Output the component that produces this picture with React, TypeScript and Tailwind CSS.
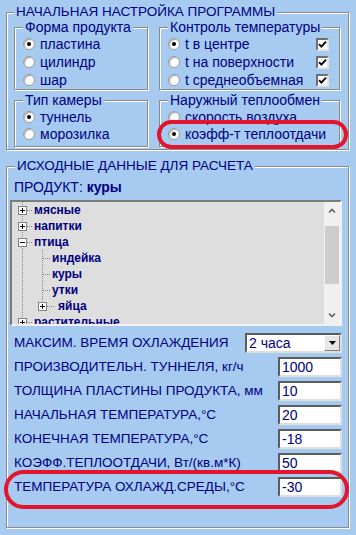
import type { ReactNode } from "react";

const etched =
  "border border-[#8a8a8a] shadow-[inset_1px_1px_0_#ffffff,1px_1px_0_#ffffff]";

const Radio = ({ on }: { on?: boolean }) => (
  <span className="w-[12px] h-[12px] shrink-0 rounded-full bg-white border border-[#9c9c9c] shadow-[inset_1px_1px_1px_#a8a8a8] flex items-center justify-center">
    {on && <span className="w-[4px] h-[4px] rounded-full bg-black" />}
  </span>
);

const Check = () => (
  <span className="w-[13px] h-[13px] bg-white border-2 border-t-[#6f6f6f] border-l-[#6f6f6f] border-r-[#e4e4e4] border-b-[#e4e4e4] flex items-center justify-center">
    <svg width="9" height="9" viewBox="0 0 9 9">
      <path d="M1 4.2 L3.4 6.6 L8 1.6" fill="none" stroke="#000" strokeWidth="1.9" />
    </svg>
  </span>
);

const Group = ({ title, className, children }: { title: string; className?: string; children: ReactNode }) => (
  <fieldset className={`${etched} pl-[8px] ${className ?? ""}`}>
    <legend className="px-0.5 bg-[#a6caf0] leading-4">{title}</legend>
    {children}
  </fieldset>
);

const Opt = ({ on, label, h = "h-[18px]" }: { on?: boolean; label: string; h?: string }) => (
  <div className={`${h} flex items-center gap-[5px]`}>
    <Radio on={on} />
    <span>{label}</span>
  </div>
);

const TempOpt = ({ on, label }: { on?: boolean; label: string }) => (
  <div className="h-[18px] flex items-center justify-between pr-[10px]">
    <div className="flex items-center gap-[5px]">
      <Radio on={on} />
      <span>{label}</span>
    </div>
    <Check />
  </div>
);

const dot = { stroke: "#8a8a8a", strokeDasharray: "1 1", strokeWidth: 1 };

const Box = ({ x, plus }: { x: number; plus: boolean }) => (
  <g>
    <rect x={x + 0.5} y={4.5} width={8} height={8} fill="#fff" stroke="#808080" />
    <line x1={x + 2} y1={8.5} x2={x + 7} y2={8.5} stroke="#000" />
    {plus && <line x1={x + 4.5} y1={6} x2={x + 4.5} y2={11} stroke="#000" />}
  </g>
);

type TreeRow = { label: string; kind: "root" | "child" | "sub"; plus?: boolean };

const rows: TreeRow[] = [
  { label: "мясные", kind: "root", plus: true },
  { label: "напитки", kind: "root", plus: true },
  { label: "птица", kind: "root", plus: false },
  { label: "индейка", kind: "child" },
  { label: "куры", kind: "child" },
  { label: "утки", kind: "child" },
  { label: "яйца", kind: "sub", plus: true },
  { label: "растительные", kind: "root", plus: true },
];

const TreeGlyph = ({ row }: { row: TreeRow }) => {
  const w = row.kind === "root" ? 20 : row.kind === "child" ? 38 : 44;
  return (
    <svg width={w} height="16" viewBox={`0 0 ${w} 16`} className="shrink-0">
      <line x1="8.5" y1="0" x2="8.5" y2="16" {...dot} />
      {row.kind === "root" && (
        <>
          <line x1="13" y1="8.5" x2="19" y2="8.5" {...dot} />
          <Box x={4} plus={!!row.plus} />
        </>
      )}
      {row.kind === "child" && (
        <>
          <line x1="28.5" y1="0" x2="28.5" y2="16" {...dot} />
          <line x1="29" y1="8.5" x2="37" y2="8.5" {...dot} />
        </>
      )}
      {row.kind === "sub" && (
        <>
          <line x1="28.5" y1="0" x2="28.5" y2="4" {...dot} />
          <line x1="33" y1="8.5" x2="41" y2="8.5" {...dot} />
          <Box x={24} plus />
        </>
      )}
    </svg>
  );
};

const sunken =
  "bg-white border-2 border-t-[#5c5c5c] border-l-[#5c5c5c] border-r-[#dedede] border-b-[#dedede]";

const fields: [string, string][] = [
  ["ПРОИЗВОДИТЕЛЬН. ТУННЕЛЯ, кг/ч", "1000"],
  ["ТОЛЩИНА ПЛАСТИНЫ ПРОДУКТА, мм", "10"],
  ["НАЧАЛЬНАЯ ТЕМПЕРАТУРА,°C", "20"],
  ["КОНЕЧНАЯ ТЕМПЕРАТУРА,°C", "-18"],
  ["КОЭФФ.ТЕПЛООТДАЧИ, Вт/(кв.м*К)", "50"],
  ["ТЕМПЕРАТУРА ОХЛАЖД.СРЕДЫ,°C", "-30"],
];

export default function App() {
  return (
    <div className="relative w-[356px] h-[535px] overflow-hidden bg-[#a6caf0] text-[#000080] text-[14px] leading-4 font-['Liberation_Sans',Arial,sans-serif]">
      {/* initial setup */}
      <fieldset className={`${etched} ml-[6px] mt-1 w-[343px] pl-[7px] pr-[8px] pb-[2px]`}>
        <legend className="px-0.5 bg-[#a6caf0] leading-4 text-[13.5px]">НАЧАЛЬНАЯ НАСТРОЙКА ПРОГРАММЫ</legend>
        <div className="-mt-px grid grid-cols-[134px_181px] gap-x-[11px] gap-y-[2px]">
          <Group title="Форма продукта">
            <Opt on label="пластина" />
            <Opt label="цилиндр" />
            <Opt label="шар" />
          </Group>
          <Group title="Контроль температуры">
            <TempOpt on label="t в центре" />
            <TempOpt label="t на поверхности" />
            <TempOpt label="t среднеобъемная" />
          </Group>
          <Group title="Тип камеры" className="pb-[4px]">
            <Opt on label="туннель" h="h-[17px]" />
            <Opt label="морозилка" h="h-[17px]" />
          </Group>
          <Group title="Наружный теплообмен" className="pb-[4px]">
            <Opt label="скорость воздуха" h="h-[17px]" />
            <Opt on label="коэфф-т теплоотдачи" h="h-[17px]" />
          </Group>
        </div>
      </fieldset>

      {/* input data */}
      <fieldset className={`${etched} ml-[6px] mt-2 w-[343px] pl-[3px] pr-[6px] pb-[28px]`}>
        <legend className="ml-[5px] px-0.5 bg-[#a6caf0] leading-4 text-[13.5px]">ИСХОДНЫЕ ДАННЫЕ ДЛЯ РАСЧЕТА</legend>
        <div className="ml-[4px] mt-[5px] h-4">
          ПРОДУКТ: <b>куры</b>
        </div>

        <div className="mt-[5px] h-[126px] flex bg-[#dedede] border-2 border-t-[#7c7c7c] border-l-[#7c7c7c] border-r-[#f2f2f2] border-b-[#f2f2f2] overflow-hidden">
          <div className="flex-1 pl-[2px] text-[12px] font-bold leading-4">
            {rows.map((r) => (
              <div key={r.label} className="h-4 flex items-center">
                <TreeGlyph row={r} />
                <span>{r.label}</span>
              </div>
            ))}
          </div>
          <div className="w-[16px] bg-[#f0f0f0] flex flex-col">
            <svg width="16" height="17" viewBox="0 0 16 17">
              <path d="M5 10.5 L8 7.5 L11 10.5" fill="none" stroke="#606060" strokeWidth="1.6" />
            </svg>
            <div className="mt-[7px] mx-[1px] h-[58px] bg-[#cdcdcd]" />
            <div className="flex-1" />
            <svg width="16" height="17" viewBox="0 0 16 17">
              <path d="M5 6.5 L8 9.5 L11 6.5" fill="none" stroke="#606060" strokeWidth="1.6" />
            </svg>
          </div>
        </div>

        <div className="mt-[5px] pl-[4px] text-[13.5px]">
          <div className="h-[24px] flex items-center justify-between">
            <span>МАКСИМ. ВРЕМЯ ОХЛАЖДЕНИЯ</span>
            <div className={`${sunken} w-[97px] h-[20px] flex items-center text-[14px]`}>
              <span className="flex-1 pl-[2px]">2 часа</span>
              <span className="w-[16px] h-full bg-[#e6e6e6] border border-t-white border-l-white border-r-[#808080] border-b-[#808080] flex items-center justify-center">
                <svg width="7" height="4" viewBox="0 0 7 4">
                  <path d="M0 0 H7 L3.5 4 Z" fill="#000" />
                </svg>
              </span>
            </div>
          </div>
          {fields.map(([label, value]) => (
            <div key={label} className="h-[24px] flex items-center justify-between">
              <span>{label}</span>
              <div className={`${sunken} w-[64px] h-[20px] pl-[2px] flex items-center text-[14px]`}>{value}</div>
            </div>
          ))}
        </div>
      </fieldset>

      {/* red annotation marks */}
      <div className="absolute left-[157px] top-[120px] w-[191px] h-[29px] rounded-full border-[4px] border-[#e3142c]" />
      <div className="absolute left-[4px] top-[470px] w-[345px] h-[39px] rounded-[20px] border-[4px] border-[#e3142c]" />
    </div>
  );
}
